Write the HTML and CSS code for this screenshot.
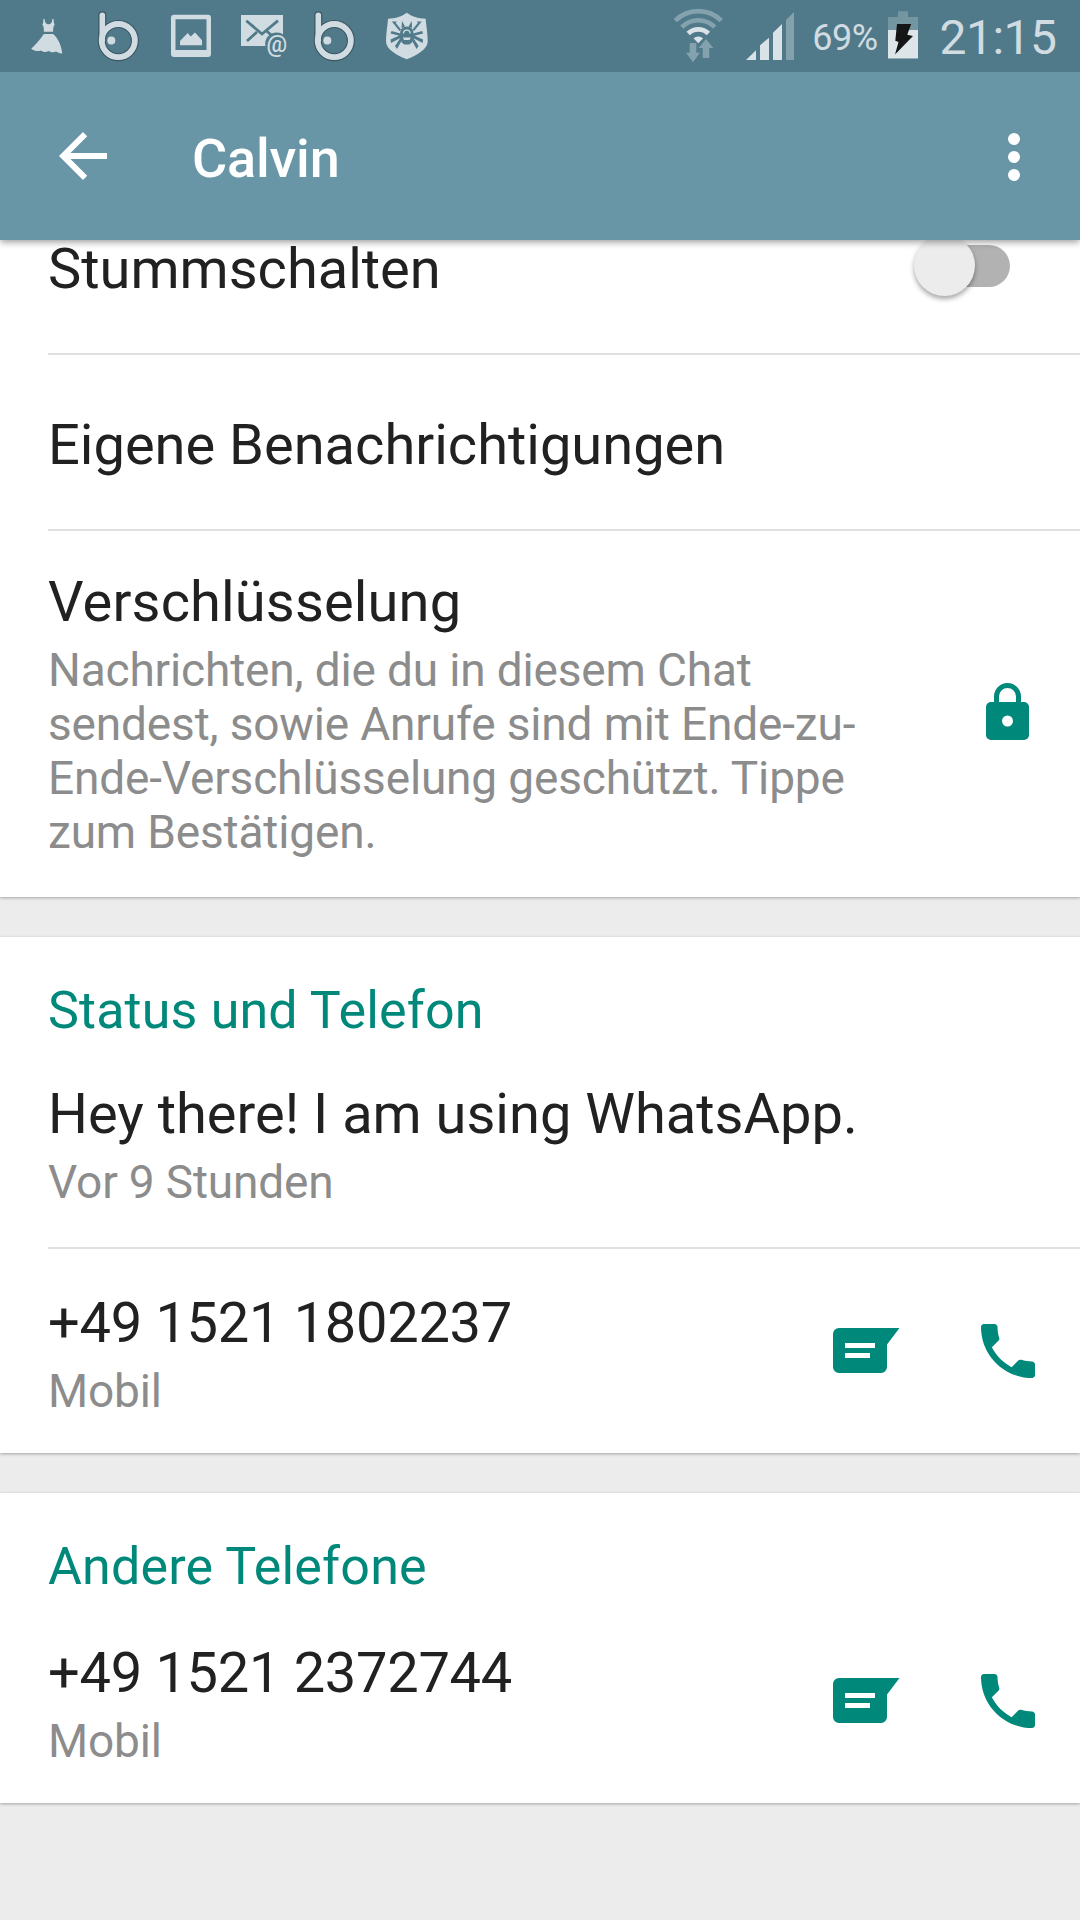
FILE: index.html
```html
<!DOCTYPE html>
<html lang="de">
<head>
    <meta charset="UTF-8">
    <title>Calvin</title>
    <link rel="stylesheet" href="styles.css">
</head>
<body>
    <!-- shared icons -->
    <svg class="defs">
        <symbol id="icon-b" viewBox="83 0 72 72">
            <g fill="none" stroke-linecap="round">
                <path d="M102.3 15.2V40.3" stroke="#3a5763" stroke-width="8"/>
                <circle cx="118.3" cy="40.6" r="16.6" stroke="#3a5763" stroke-width="8"/>
                <path d="M102.3 15.2V40.3" stroke="#d0dce1" stroke-width="5.6"/>
                <circle cx="118.3" cy="40.6" r="16.6" stroke="#d0dce1" stroke-width="5.8"/>
            </g>
            <circle cx="111.3" cy="40.5" r="4" fill="#d0dce1"/>
        </symbol>
        <symbol id="icon-message" viewBox="0 0 72 50">
            <path d="M6 2H69.5L57 18.5V41a6 6 0 0 1-6 6H9a6 6 0 0 1-6-6V8a6 6 0 0 1 6-6z" fill="#00897b"/>
            <path d="M15 17h30v5H15zM15 27h25v5H15z" fill="#fff"/>
        </symbol>
        <symbol id="icon-call" viewBox="0 0 24 24">
            <path d="M6.62 10.79c1.44 2.83 3.76 5.14 6.59 6.59l2.2-2.2c.27-.27.67-.36 1.02-.24 1.12.37 2.33.57 3.57.57.55 0 1 .45 1 1V20c0 .55-.45 1-1 1-9.39 0-17-7.61-17-17 0-.55.45-1 1-1h3.5c.55 0 1 .45 1 1 0 1.25.2 2.45.57 3.57.11.35.03.74-.25 1.02l-2.2 2.2z" fill="#00897b"/>
        </symbol>
    </svg>

    <div class="statusbar">
        <div class="notifications">
            <svg width="72" height="72" viewBox="11 0 72 72" fill="#d0dce1">
                <path d="M43.3 19h1.3c.2 3.5 1.600 5.300 3.900 5.300s3.700-1.800 3.900-5.300h1.300c-.2 3 .3 4.500 1 5.500-1.500 2-1.700 4.500-1.500 7.300h-9.400c.2-3 0-5.300-1.500-7.300.8-1 1.200-2.500 1-5.500z"/>
                <path d="M43.8 34h9.400c5 4.500 8 11 9 19.500-2.500.3-4-.8-6.200-1.900-2.500 1.400-5 .7-7.500-.7-2.500 1.700-5.200 1.300-7.500-.4-3 1.100-6.500.8-9.800-1.700 4.500-4 8.600-9 12.600-14.800z"/>
            </svg>
            <svg width="72" height="72"><use href="#icon-b"/></svg>
            <svg width="72" height="72" viewBox="155 0 72 72" fill="#d0dce1">
                <path fill-rule="evenodd" d="M174 14.700h34a3 3 0 0 1 3 3V54a3 3 0 0 1-3 3h-34a3 3 0 0 1-3-3V17.700a3 3 0 0 1 3-3zM175.500 19.300V50h31V19.300z"/>
                <path d="M180 45.300V41l7.700-8 3 3.600 4.300-4 7 7.700v5z"/>
            </svg>
            <svg width="72" height="72" viewBox="227 0 72 72">
                <path d="M241 15h42v31h-42z" fill="#d0dce1"/>
                <path d="M246.300 20.700l15.700 13.300 16-13.300M247 41l10-9M266.500 31l6 5" fill="none" stroke="#507a8a" stroke-width="2.800"/>
                <circle cx="276.700" cy="44" r="11.500" fill="#507a8a"/>
                <text class="at" x="276.700" y="51.500" text-anchor="middle">@</text>
            </svg>
            <svg width="72" height="72"><use href="#icon-b"/></svg>
            <svg width="72" height="72" viewBox="371 0 72 72">
                <path d="M406.800 12.700c5 3.500 11 5.800 18.800 6 .8 8 2.100 16 2.100 22.500 0 8-11 14-20.900 18.100-9.900-4.100-20.800-10.100-20.800-18.100 0-6.500 1.300-14.500 2.100-22.500 7.800-.2 13.700-2.500 18.700-6z" fill="#d0dce1"/>
                <!-- spider legs and body -->
                <g fill="#507a8a">
                    <path d="M391.800 21.500h5l-1 1.500 5.200 6.500-1.500 1.500zM402 21l3 5.500-3.500 1.500zM390.500 33.500l1-2.500 9 2.500v2.500zM391 43l-.5-3.500 10-4.500v3zM397 49l-2-3 5-7.500 2 1.500z"/>
                    <path d="M421.800 21.500h-5l1 1.500-5.200 6.500 1.500 1.500zM411.600 21l-3 5.500 3.500 1.500zM423.100 33.500l-1-2.500-9 2.500v2.500zM422.600 43l.5-3.500-10-4.500v3zM416.600 49l2-3-5-7.500-2 1.500z"/>
                    <path d="M400.300 31.500c1-3.500 3-5 6.500-5s5.500 1.500 6.500 5l.7 6.500-2.200 4.500-2.500 2h-5l-2.500-2-2.200-4.500z"/>
                </g>
                <path d="M403.500 33.500a3.300 3.300 0 1 1 6.600 0" fill="none" stroke="#d0dce1" stroke-width="1.300"/>
                <path d="M402.800 37.500h8l-1.300 2.500h-5.400z" fill="#d0dce1"/>
            </svg>
        </div>
        <div class="system">
            <svg width="72" height="72" viewBox="664 0 72 72">
                <g fill="none" stroke-width="4.700">
                    <path d="M675.300 20.600a32.500 32.500 0 0 1 46 0M681.800 27.100a23.300 23.300 0 0 1 33 0" stroke="#84a2ae"/>
                    <path d="M688.200 33.500a14.300 14.300 0 0 1 20.200 0" stroke="#d9e3e7"/>
                </g>
                <path d="M698.300 43.300l-4.800-5a7.200 7.200 0 0 1 9.600 0z" fill="#d9e3e7"/>
                <path d="M689.700 43h6.600v9.700h3.700l-7 9.600-7-9.600h3.700zM702.700 58V48h-4l7.300-9 7.300 9h-4v10z" fill="#84a2ae"/>
            </svg>
            <svg width="64" height="72" viewBox="736 0 64 72">
                <path d="M746 60l10-9.700V60zM760 60V45.300l9-7.600V60zM773 60V32.700l9-8.700v36z" fill="#d9e3e7"/>
                <path d="M786 60V20l8-8v48z" fill="#84a2ae"/>
            </svg>
            <span class="percent">69%</span>
            <svg width="46" height="72" viewBox="880 0 46 72">
                <path d="M898 11.300h10V17h10v42h-30V17h10z" fill="#7496a1"/>
                <path d="M888 30h30v28.300h-30z" fill="#dde5e9"/>
                <path d="M897 24h14.200l-4 10.800 5.800 1.200-18 18.500 3.500-12.500-3.200-1.200z" fill="#151515"/>
            </svg>
            <span class="clock">21:15</span>
        </div>
    </div>

    <div class="appbar">
        <svg class="back" width="72" height="72" viewBox="0 0 24 24"><path d="M20 11H7.830l5.590-5.590L12 4l-8 8 8 8 1.410-1.410L7.830 13H20v-2z" fill="#fff"/></svg>
        <h1>Calvin</h1>
        <svg class="more" width="72" height="72" viewBox="0 0 72 72" fill="#fff">
            <circle cx="36" cy="19" r="6"/>
            <circle cx="36" cy="37" r="6"/>
            <circle cx="36" cy="55" r="6"/>
        </svg>
    </div>

    <div class="card">
        <div class="row mute">
            <div class="title">Stummschalten</div>
            <div class="switch"><span class="thumb"></span></div>
        </div>
        <div class="row custom">
            <div class="title">Eigene Benachrichtigungen</div>
        </div>
        <div class="row encryption">
            <div class="text">
                <div class="title">Verschlüsselung</div>
                <div class="desc">Nachrichten, die du in diesem Chat<br>sendest, sowie Anrufe sind mit Ende-zu-<br>Ende-Verschlüsselung geschützt. Tippe<br>zum Bestätigen.</div>
            </div>
            <svg class="lock" width="72" height="72" viewBox="972 678 72 72">
                <path d="M996.500 704v-7.500a11 11 0 0 1 22 0V704" fill="none" stroke="#00897b" stroke-width="5"/>
                <rect x="986" y="702" width="43" height="38" rx="5" fill="#00897b"/>
                <circle cx="1007.500" cy="721" r="5.500" fill="#fff"/>
            </svg>
        </div>
    </div>

    <div class="card">
        <h2>Status und Telefon</h2>
        <div class="row status">
            <div class="text">
                <div class="title">Hey there! I am using WhatsApp.</div>
                <div class="desc">Vor 9 Stunden</div>
            </div>
        </div>
        <div class="row phone">
            <div class="text">
                <div class="title">+49 1521 1802237</div>
                <div class="desc">Mobil</div>
            </div>
            <div class="actions">
                <svg width="72" height="50"><use href="#icon-message"/></svg>
                <svg width="72" height="72"><use href="#icon-call"/></svg>
            </div>
        </div>
    </div>

    <div class="card">
        <h2>Andere Telefone</h2>
        <div class="row phone">
            <div class="text">
                <div class="title">+49 1521 2372744</div>
                <div class="desc">Mobil</div>
            </div>
            <div class="actions">
                <svg width="72" height="50"><use href="#icon-message"/></svg>
                <svg width="72" height="72"><use href="#icon-call"/></svg>
            </div>
        </div>
    </div>
</body>
</html>
```
FILE: styles.css
```css
* {
    box-sizing: border-box;
}

body {
    margin: 0;
    width: 1080px;
    height: 1920px;
    overflow: hidden;
    background: #ececec;
    font-family: Roboto, sans-serif;
    color: #212121;
}

h1,
h2 {
    margin: 0;
}

svg {
    display: block;
    flex-shrink: 0;
}

.defs {
    display: none;
}

/* status bar */
.statusbar {
    position: relative;
    z-index: 2;
    display: flex;
    justify-content: space-between;
    height: 72px;
    padding: 0 10px 0 11px;
    background: #507a8a;
    color: #d0dce1;
}

.notifications,
.system {
    display: flex;
}

.at {
    font-size: 23px;
    font-weight: 500;
    fill: #d0dce1;
}

.percent {
    width: 80px;
    padding-left: 10px;
    font-size: 36px;
    line-height: 76px;
    letter-spacing: -.5px;
    text-align: center;
}

.clock {
    width: 144px;
    font-size: 48px;
    line-height: 75px;
    letter-spacing: -.5px;
    text-align: center;
}

/* app bar */
.appbar {
    position: relative;
    z-index: 1;
    display: flex;
    align-items: center;
    height: 168px;
    padding: 0 30px 0 47px;
    background: #6896a6;
    box-shadow: 0 2px 7px rgba(0, 0, 0, .4);
}

.appbar h1 {
    margin-left: 73px;
    font-size: 54px;
    font-weight: 500;
    line-height: 64px;
    letter-spacing: -.2px;
    padding-top: 5px;
    color: #fff;
}

.more {
    margin-left: auto;
}

/* cards */
.card {
    margin-bottom: 40px;
    background: #fff;
    box-shadow: 0 1px 3px rgba(0, 0, 0, .3);
}

.card h2 {
    height: 106px;
    padding: 43px 0 0 48px;
    font-size: 52px;
    font-weight: 400;
    line-height: 61px;
    letter-spacing: .15px;
    color: #00897b;
}

.row {
    display: flex;
    justify-content: space-between;
    margin-left: 48px;
}

.row + .row {
    border-top: 2px solid #e0e0e0;
}

.title {
    height: 57px;
    font-size: 56px;
    line-height: 59px;
    white-space: nowrap;
}

.desc {
    margin-top: 13px;
    font-size: 46px;
    line-height: 54px;
    letter-spacing: -.16px;
    color: #8c8c8c;
    white-space: nowrap;
}

.mute {
    height: 113px;
}

.custom {
    height: 176px;
    padding-top: 61px;
}

.encryption {
    height: 368px;
    padding: 42px 36px 0 0;
}

.encryption .title {
    letter-spacing: .15px;
}

.lock {
    margin-top: 105px;
}

.status {
    height: 204px;
    padding-top: 42px;
}

.phone {
    height: 204px;
    padding: 45px 36px 0 0;
}

.phone .title {
    letter-spacing: -.3px;
}

.row + .phone {
    height: 206px;
}

.actions {
    display: flex;
    align-items: center;
    gap: 70px;
    height: 114px;
}

/* switch */
.switch {
    position: relative;
    width: 84px;
    height: 42px;
    margin: 5px 70px 0 0;
    border-radius: 21px;
    background: #b2b2b2;
}

.thumb {
    position: absolute;
    left: -12px;
    top: -10px;
    width: 61px;
    height: 61px;
    border-radius: 50%;
    background: #ececec;
    box-shadow: 0 3px 5px rgba(0, 0, 0, .35);
}
```
